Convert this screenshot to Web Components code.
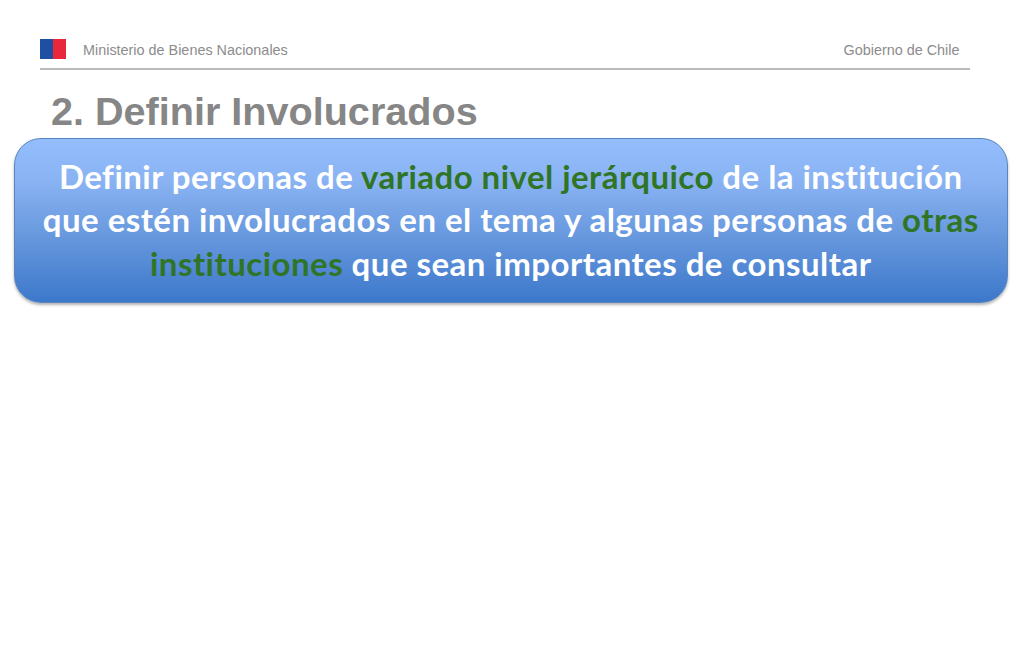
<!DOCTYPE html>
<html><head><meta charset="utf-8"><style>
html,body{margin:0;padding:0;background:#fff;height:650px;overflow:hidden}
</style></head><body>
<slide-page>
<slide-header left="Ministerio de Bienes Nacionales" right="Gobierno de Chile"></slide-header>
<slide-title>2. Definir Involucrados</slide-title>
<callout-box>Definir personas de <b>variado nivel jerárquico</b> de la institución<br>que estén involucrados en el tema y algunas personas de <b>otras</b><br><b>instituciones</b> que sean importantes de consultar</callout-box>
</slide-page>
<script>
function def(name,html,init){customElements.define(name,class extends HTMLElement{constructor(){super();const r=this.attachShadow({mode:'open'});r.innerHTML=html;if(init)init(this,r);}connectedCallback(){if(init)init(this,this.shadowRoot);}});}
def('slide-page',`<style>:host{display:flex;flex-direction:column;width:1024px;height:650px;box-sizing:border-box;padding-top:38px;font-family:"Liberation Sans",Arial,sans-serif}</style><slot></slot>`);
def('slide-header',`<style>
:host{display:flex;align-items:center;box-sizing:border-box;margin:0 54px 0 40px;height:32px;padding:1px 10.5px 8px 0;border-bottom:2px solid #b9b9b9;font-size:14.4px;color:#8c8c8c}
.flag{display:flex;width:26px;height:20px;margin-right:17px;flex:none;margin-top:-2px}
.flag i{display:block;height:100%}
.flag i:first-child{width:13px;background:#1f4fa3}
.flag i:last-child{width:13px;background:#e8273b}
.s{flex:1}
</style><span class="flag"><i></i><i></i></span><span id="l"></span><span class="s"></span><span id="r"></span>`,(h,r)=>{r.getElementById('l').textContent=h.getAttribute('left')||'';r.getElementById('r').textContent=h.getAttribute('right')||'';});
def('slide-title',`<style>:host{display:block;margin:18px 0 0 51px;height:50px;font-size:39.6px;line-height:46px;font-weight:700;color:#868686}</style><slot></slot>`);
def('callout-box',`<style>
:host{display:flex;align-items:center;justify-content:center;box-sizing:border-box;width:994.5px;height:165px;margin-left:13.5px;border:1px solid #5a85bd;border-radius:27px;background:linear-gradient(180deg,#94bdfd 0%,#8ab3f3 25%,#6596dc 62%,#3c78cb 100%);box-shadow:0 2px 3px rgba(0,0,0,.3);font-family:Lato,sans-serif;font-weight:700;font-size:33px;letter-spacing:.47px;line-height:43.6px;color:#fff;text-align:center;padding-bottom:1px}
::slotted(b){color:#2f7525;font-weight:700}
</style><div><slot></slot></div>`);
</script>
</body></html>
